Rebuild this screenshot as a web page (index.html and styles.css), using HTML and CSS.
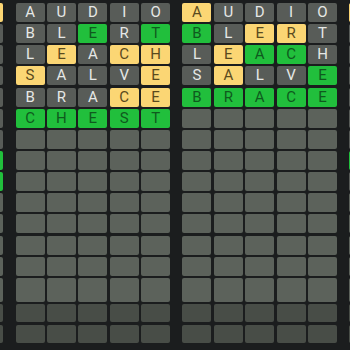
FILE: index.html
```html
<!DOCTYPE html>
<html lang="en">
<head>
  <meta charset="UTF-8" />
  <meta name="viewport" content="width=device-width, initial-scale=1.0" />
  <title>Octordle</title>
  <link rel="stylesheet" href="styles.css">
</head>
<body>
  <div class="boards" id="boards"></div>

  <script>
    const guesses = ['AUDIO', 'BLERT', 'LEACH', 'SALVE', 'BRACE', 'CHEST', '', '', ''];

    // g = green, y = yellow, b = gray
    const boards = [
      { marks: ['bbbby', 'bbbbb', 'bbbbb', 'bbbbb', 'bbbbb', 'bbbbb', 'bbbbb', 'bbbbg', 'bbbbg'] },
      { marks: ['bbbbb', 'bbgbg', 'bybyy', 'ybbby', 'bbbyy', 'ggggg'] },
      { marks: ['ybbbb', 'gbyyb', 'byggb', 'bybbg', 'ggggg'] },
      { marks: ['ybbbb', 'bbbbb', 'bbbbb', 'bbbbb', 'bbbbb', 'bbbbb', 'bbbbb', 'gbbbb', 'bbbbb'] }
    ];

    const TOTAL_ROWS = 16;
    const container = document.getElementById('boards');

    boards.forEach(board => {
      const el = document.createElement('div');
      el.className = 'board';
      for (let r = 0; r < TOTAL_ROWS; r++) {
        for (let c = 0; c < 5; c++) {
          const tile = document.createElement('div');
          tile.className = 'tile';
          if (r < board.marks.length) {
            const mark = board.marks[r][c];
            tile.classList.add(mark === 'g' ? 'green' : mark === 'y' ? 'yellow' : 'gray');
            tile.textContent = guesses[r] ? guesses[r][c] : '';
          } else if (r >= 14) {
            tile.classList.add('faded');
          }
          el.appendChild(tile);
        }
      }
      container.appendChild(el);
    });
  </script>
</body>
</html>
```

FILE: styles.css
```css
html, body {
  margin: 0;
  height: 100%;
  overflow: hidden;
}

body {
  background-color: #1b1d1e;
  font-family: Roboto, 'Noto Sans', sans-serif;
}

.boards {
  display: flex;
  gap: 12.3px;
  margin-left: -151.3px;
  padding-top: 3px;
}

.board {
  flex: none;
  display: grid;
  grid-template-columns: repeat(5, 29px);
  grid-template-rows: repeat(13, 19px) 24px 18.5px 18.5px;
  column-gap: 2.4px;
  row-gap: 2.15px;
}

.tile {
  background-color: #5c625b;
  border-radius: 2px;
  display: flex;
  align-items: center;
  justify-content: center;
  font-size: 15px;
  line-height: 1;
  color: #e6e8e6;
}

.tile.gray {
  background-color: #585c58;
}

.tile.green {
  background-color: #21bf3c;
  color: #0f5a1e;
}

.tile.yellow {
  background-color: #fbd674;
  color: #5a4a1e;
}

.tile.faded {
  background-color: #484d47;
}
```
